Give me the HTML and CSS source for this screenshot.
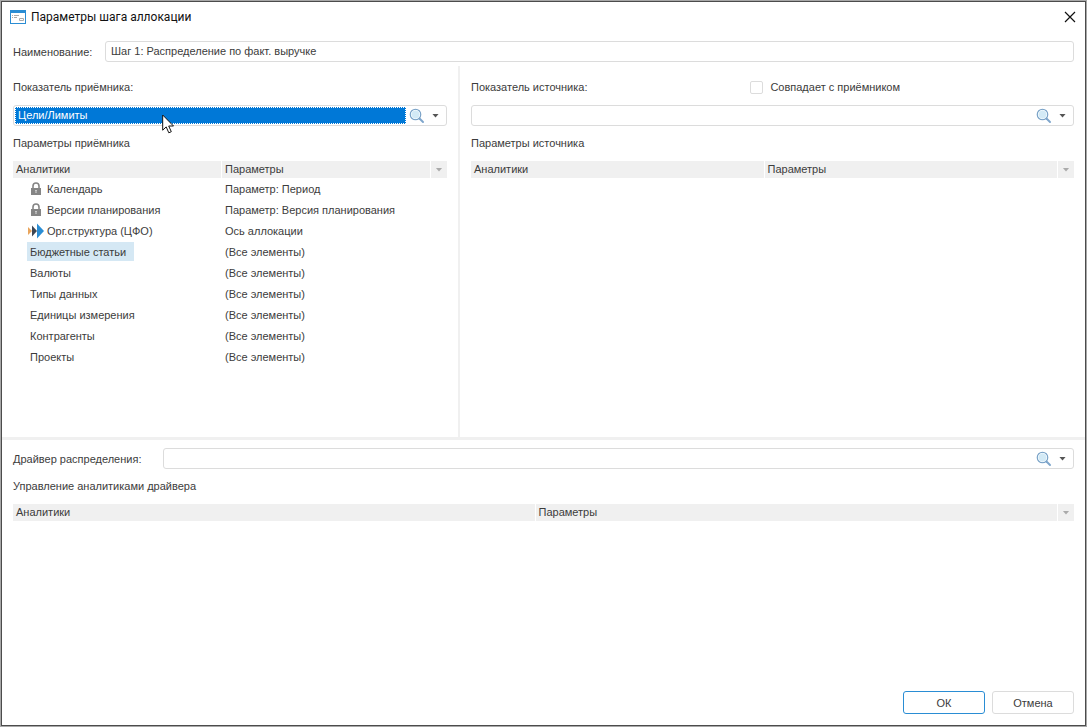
FILE: index.html
```html
<!doctype html>
<html lang="ru">
  <head>
    <meta charset="UTF-8" />
    <meta name="viewport" content="width=device-width, initial-scale=1.0" />
    <title>Параметры шага аллокации</title>
    <link rel="stylesheet" href="styles.css">
  </head>
  <body>
    <!-- shared icons -->
    <svg class="sprite" aria-hidden="true">
      <symbol id="i-search" viewBox="0 0 16 16">
        <path d="M10.5 10.5 14 14" stroke="#7fa6cc" stroke-width="2" stroke-linecap="round" />
        <circle cx="6.5" cy="6.5" r="5.2" fill="#d3eaf6" stroke="#7ba3c8" stroke-width="1.3" />
        <circle cx="6.5" cy="6.5" r="4.1" fill="none" stroke="#eef8fd" stroke-width="1" />
      </symbol>
      <symbol id="i-lock" viewBox="0 0 12 14">
        <path d="M3 7V4a3 3 0 0 1 6 0v3" fill="none" stroke="#858585" stroke-width="1.6" />
        <path d="M1 6h10v7H1z" fill="#858585" />
        <path d="M5.2 8h1.6v1.2H5.2zM5.5 9.6h1V11h-1z" fill="#ddd" />
      </symbol>
    </svg>

    <form class="dialog" role="dialog" aria-labelledby="dialogTitle">
      <header class="titlebar">
        <svg class="titlebar-icon" viewBox="0 0 16 14" aria-hidden="true">
          <path d="M0 0h16v14H0z" fill="#2a8dd4" />
          <path d="M1 3h14v10H1z" fill="#fff" />
          <path d="M2 5.5h1M4 5.5h5M2 7.5h1M4 7.5h3" stroke="#aaa" />
          <path d="M9.5 8.5h4v2h-4z" fill="none" stroke="#aaa" />
        </svg>
        <h1 id="dialogTitle">Параметры шага аллокации</h1>
        <button class="close" type="button" aria-label="Закрыть">
          <svg viewBox="0 0 12 12"><path d="M1 1l10 10M11 1 1 11" stroke="#111" stroke-width="1.2" /></svg>
        </button>
      </header>

      <div class="field-row">
        <label for="stepName">Наименование:</label>
        <input id="stepName" class="text-input" type="text" value="Шаг 1: Распределение по факт. выручке" />
      </div>

      <div class="panes">
        <section class="pane target">
          <div class="pane-head">
            <label for="targetIndicator">Показатель приёмника:</label>
          </div>
          <div class="combo">
            <input id="targetIndicator" class="selected" type="text" value="Цели/Лимиты" />
            <button class="combo-search" type="button" aria-label="Найти"><svg><use href="#i-search" /></svg></button>
            <button class="combo-drop" type="button" aria-label="Открыть список"></button>
            <svg class="cursor" viewBox="0 0 13 20" aria-hidden="true">
              <path d="M.7 1v15.2l3.5-3.3 2.6 5.9 2.5-1.1-2.6-5.7h4.8z" fill="#fff" stroke="#111" />
            </svg>
          </div>
          <h2>Параметры приёмника</h2>
          <table class="grid">
            <colgroup><col /><col /><col class="col-menu" /></colgroup>
            <thead>
              <tr><th>Аналитики</th><th>Параметры</th><th><button class="menu" type="button" aria-label="Меню столбцов"></button></th></tr>
            </thead>
            <tbody>
              <tr><td><span class="item"><svg class="lock"><use href="#i-lock" /></svg>Календарь</span></td><td colspan="2">Параметр: Период</td></tr>
              <tr><td><span class="item"><svg class="lock"><use href="#i-lock" /></svg>Версии планирования</span></td><td colspan="2">Параметр: Версия планирования</td></tr>
              <tr>
                <td>
                  <span class="item">
                    <svg class="axis" viewBox="0 0 16 16" aria-hidden="true">
                      <path d="M0 4l4 4-4 4z" fill="#e9a55c" />
                      <path d="M4 2.5 9 8l-5 5.5z" fill="#3d4654" />
                      <path d="M9 .5 16 8l-7 7.5z" fill="#2a8dd4" />
                    </svg>Орг.структура (ЦФО)</span>
                </td>
                <td colspan="2">Ось аллокации</td>
              </tr>
              <tr><td><span class="item current">Бюджетные статьи</span></td><td colspan="2">(Все элементы)</td></tr>
              <tr><td><span class="item">Валюты</span></td><td colspan="2">(Все элементы)</td></tr>
              <tr><td><span class="item">Типы данных</span></td><td colspan="2">(Все элементы)</td></tr>
              <tr><td><span class="item">Единицы измерения</span></td><td colspan="2">(Все элементы)</td></tr>
              <tr><td><span class="item">Контрагенты</span></td><td colspan="2">(Все элементы)</td></tr>
              <tr><td><span class="item">Проекты</span></td><td colspan="2">(Все элементы)</td></tr>
            </tbody>
          </table>
        </section>

        <section class="pane source">
          <div class="pane-head">
            <label for="sourceIndicator">Показатель источника:</label>
            <label class="check"><input type="checkbox" />Совпадает с приёмником</label>
          </div>
          <div class="combo">
            <input id="sourceIndicator" type="text" />
            <button class="combo-search" type="button" aria-label="Найти"><svg><use href="#i-search" /></svg></button>
            <button class="combo-drop" type="button" aria-label="Открыть список"></button>
          </div>
          <h2>Параметры источника</h2>
          <table class="grid">
            <colgroup><col /><col /><col class="col-menu" /></colgroup>
            <thead>
              <tr><th>Аналитики</th><th>Параметры</th><th><button class="menu" type="button" aria-label="Меню столбцов"></button></th></tr>
            </thead>
          </table>
        </section>
      </div>

      <section class="driver">
        <div class="driver-row">
          <label for="driver">Драйвер распределения:</label>
          <div class="combo">
            <input id="driver" type="text" />
            <button class="combo-search" type="button" aria-label="Найти"><svg><use href="#i-search" /></svg></button>
            <button class="combo-drop" type="button" aria-label="Открыть список"></button>
          </div>
        </div>
        <h2>Управление аналитиками драйвера</h2>
        <table class="grid">
          <colgroup><col /><col /><col class="col-menu" /></colgroup>
          <thead>
            <tr><th>Аналитики</th><th>Параметры</th><th><button class="menu" type="button" aria-label="Меню столбцов"></button></th></tr>
          </thead>
        </table>
      </section>

      <footer class="actions">
        <button class="btn primary" type="submit">ОК</button>
        <button class="btn" type="button">Отмена</button>
      </footer>
    </form>
  </body>
</html>
```

FILE: styles.css
```css
:root {
  --fg: #3c3c3c;
  --border: #dcdcdc;
  --line: #f0f0f0;
  --accent: #2a8dd4;
}

* {
  box-sizing: border-box;
}

body {
  margin: 0;
  padding: 1px;
  background: #a8a8a8;
  color: var(--fg);
  font: 11px/16px 'Liberation Sans', Arial, sans-serif;
}

input,
button {
  font: inherit;
  color: inherit;
}

button {
  padding: 0;
  border: 0;
  background: none;
}

svg {
  display: block;
}

.sprite {
  position: absolute;
  width: 0;
  height: 0;
}

.dialog {
  display: flex;
  flex-direction: column;
  min-height: calc(100vh - 2px);
  border: 1px solid #4c4c4c;
  background: #fff;
}

/* title */
.titlebar {
  display: flex;
  align-items: center;
  gap: 5px;
  height: 29px;
  padding: 0 8px;
}
.titlebar-icon {
  width: 16px;
  height: 14px;
}
.titlebar h1 {
  flex: 1;
  margin: 0;
  font: 12px/16px Roboto, 'Open Sans', sans-serif;
  color: #111;
}
.close {
  width: 14px;
  height: 12px;
}
.close svg {
  width: 12px;
  height: 12px;
  margin: 0 auto;
}

/* fields */
.field-row {
  display: flex;
  align-items: center;
  padding: 10px 11px 4px;
}
.field-row label {
  width: 92px;
}
.text-input,
.combo {
  height: 21px;
  border: 1px solid var(--border);
  border-radius: 3px;
  background: #fff;
}
.text-input {
  flex: 1;
  min-width: 0;
  padding: 0 5px 1px;
}

.combo {
  position: relative;
  display: flex;
  align-items: center;
  padding: 1px;
}
.combo input {
  flex: 1;
  min-width: 0;
  height: 17px;
  padding: 0 2px;
  border: 0;
  background: none;
}
.combo .selected {
  padding-bottom: 1px;
  border: 1px dotted #fff;
  background: #0078d7;
  color: #fff;
}
.combo-search {
  padding: 0 1px 0 3px;
}
.combo-search svg {
  width: 16px;
  height: 16px;
}
.combo-drop {
  width: 19px;
  height: 17px;
}
.combo-drop::before,
.menu::before {
  content: '';
  display: block;
  width: 7px;
  height: 4px;
  margin: 0 auto;
  background: #555;
  clip-path: polygon(0 0, 100% 0, 50% 100%);
}
.cursor {
  position: absolute;
  top: 8px;
  left: 148px;
  width: 13px;
  height: 20px;
}

/* panes */
.panes {
  display: grid;
  grid-template-columns: 456fr 627fr;
  border-bottom: 3px solid var(--line);
}
.pane {
  min-width: 0;
  padding: 13px 11px 70px;
}
.source {
  border-left: 2px solid var(--line);
}
.pane-head {
  display: flex;
  align-items: center;
  height: 16px;
  margin-bottom: 10px;
}
.pane-head > label:first-child {
  flex: 1;
}
.check {
  display: flex;
  flex: 0 0 54%;
  align-items: center;
  gap: 7px;
  padding-left: 2px;
}
.check input {
  appearance: none;
  width: 13px;
  height: 13px;
  margin: 0;
  border: 1px solid var(--border);
  border-radius: 2px;
}
.check input:checked {
  background: var(--accent);
}
h2 {
  margin: 9px 0 10px;
  font: inherit;
}

.grid {
  width: 100%;
  table-layout: fixed;
  border-collapse: separate;
  border-spacing: 0;
}
.col-menu {
  width: 16px;
}
.grid th {
  height: 17px;
  padding: 0 3px;
  border-right: 1px solid #fff;
  background: var(--line);
  font-weight: normal;
  line-height: 17px;
  text-align: left;
}
.grid th:last-child {
  padding: 0;
  border: 0;
}
.grid td {
  height: 21px;
  padding: 0 3px;
  white-space: nowrap;
}
.grid td:first-child {
  padding-left: 14px;
}
.menu {
  display: block;
  width: 100%;
  height: 17px;
}
.menu::before {
  background: #aaa;
}
.item {
  display: inline-flex;
  align-items: center;
  height: 19px;
  padding: 0 3px;
  vertical-align: top;
}
.current {
  padding-right: 8px;
  background: #d5e8f4;
}
.lock {
  width: 12px;
  height: 14px;
  margin-right: 5px;
}
.axis {
  width: 16px;
  height: 16px;
  margin: 0 3px 0 -2px;
}

/* driver */
.driver {
  flex: 1;
  padding: 8px 11px;
}
.driver-row {
  display: flex;
  align-items: center;
}
.driver-row label {
  width: 150px;
}
.driver-row .combo {
  flex: 1;
}

.actions {
  display: flex;
  justify-content: flex-end;
  gap: 7px;
  padding: 11px;
}
.btn {
  width: 82px;
  height: 23px;
  border: 1px solid var(--border);
  border-radius: 3px;
  background: #fff;
}
.primary {
  border-color: var(--accent);
}
```
